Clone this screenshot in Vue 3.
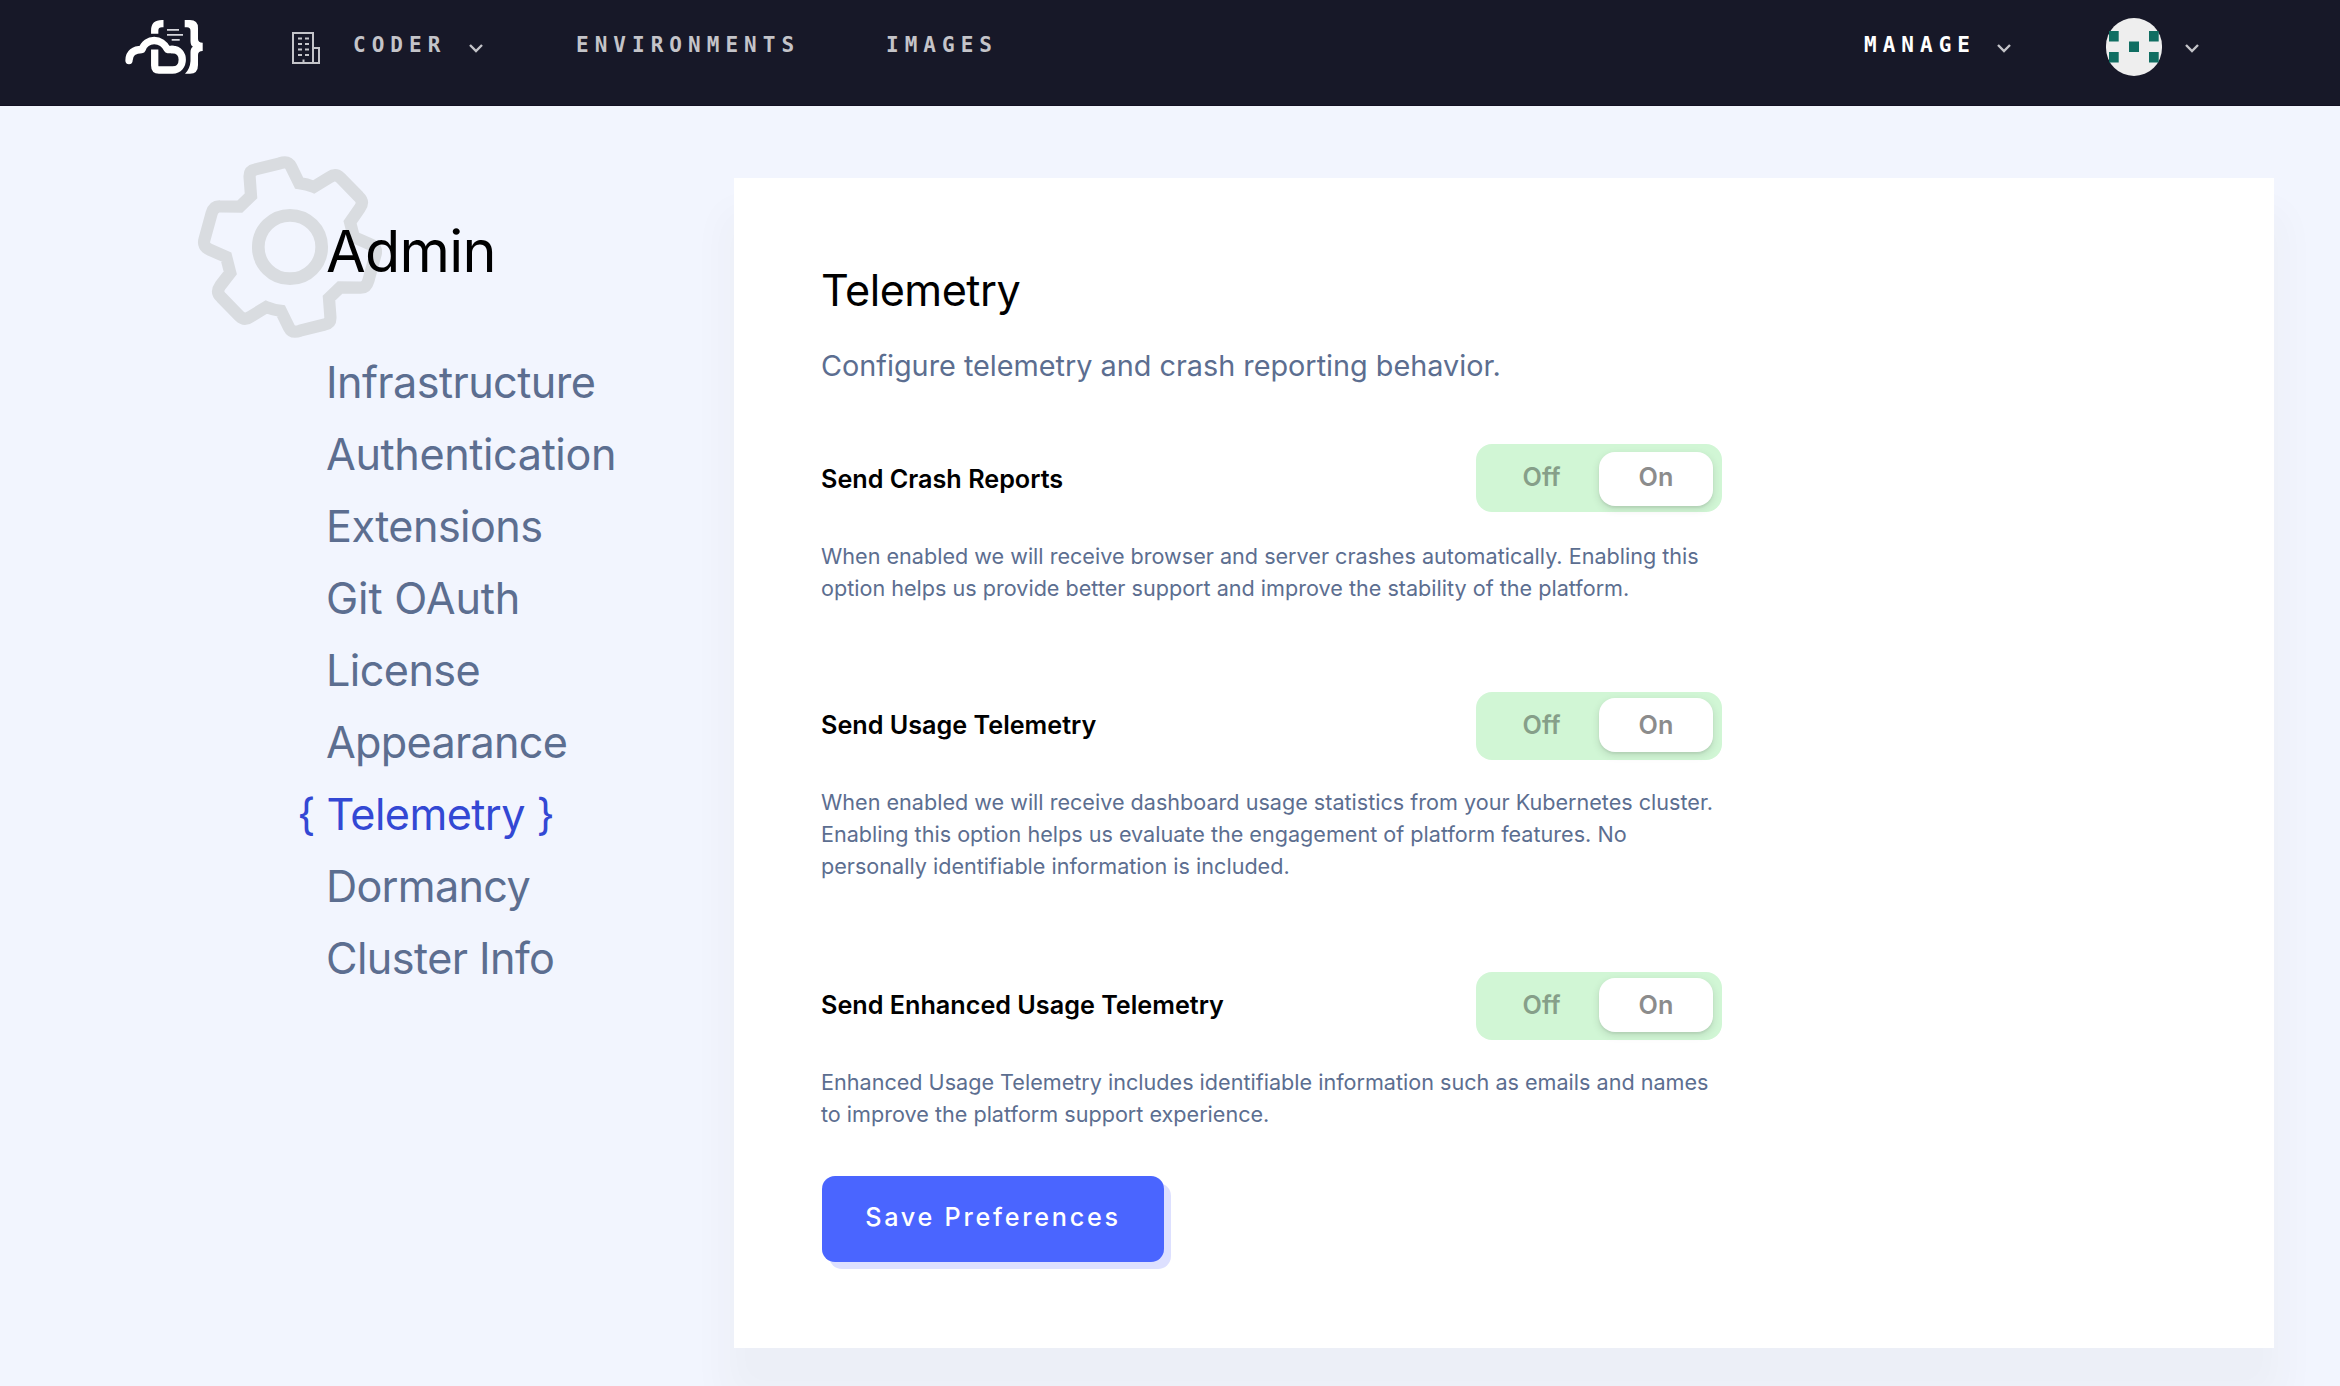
<script setup>
const nav = ['Infrastructure', 'Authentication', 'Extensions', 'Git OAuth', 'License', 'Appearance', 'Telemetry', 'Dormancy', 'Cluster Info']
const settings = [
  { key: 'crash', title: 'Send Crash Reports', lines: ['When enabled we will receive browser and server crashes automatically. Enabling this', 'option helps us provide better support and improve the stability of the platform.'] },
  { key: 'usage', title: 'Send Usage Telemetry', lines: ['When enabled we will receive dashboard usage statistics from your Kubernetes cluster.', 'Enabling this option helps us evaluate the engagement of platform features. No', 'personally identifiable information is included.'] },
  { key: 'enhanced', title: 'Send Enhanced Usage Telemetry', lines: ['Enhanced Usage Telemetry includes identifiable information such as emails and names', 'to improve the platform support experience.'] },
]
</script>

<template>
  <div class="page">
    <header class="topbar">
      <svg class="logo" width="80" height="56" viewBox="0 0 80 56">
        <g fill="none" stroke="#fff" stroke-width="7.300">
          <path d="M39.500 4.700H38Q30.700 4.700 30.700 11.500V14.700" />
          <path d="M5 41.500C5 34 10 30.500 18 30.500C22 18.500 38 18.500 43.500 30.500H49" stroke-linecap="round" stroke-linejoin="round" />
          <path d="M47 30.500H48.500C61.500 30.500 61.500 51 48.500 51H35Q30.700 51 30.700 46.500V30.500" />
        </g>
        <path fill="#fff" d="M60.700 1H66Q74 1 74 9V20Q74 23.700 78.700 23.700V32Q74 32 74 36V46Q74 54.700 66 54.700H61Q66 50 66.500 42V33Q66.500 29 69 27.800Q66.500 26.500 66.500 22V12Q66.500 8.300 63 8.300H60.700z" />
        <path stroke="#d6d6dc" stroke-width="1.800" d="M43 10.800h12M43 15.800h16M47.700 20.800h8" />
      </svg>
      <svg class="building" width="28" height="34" viewBox="0 0 28 34" fill="none" stroke="#c4c4c9" stroke-width="2">
        <path d="M1 2h20v30H1zM21 17h6v15h-6" />
        <path d="M6 7.500h4M13 7.500h4M6 13h4M13 13h4M6 18.500h4M13 18.500h4M6 24h4M13 24h4M11.500 28.500v4" />
      </svg>
      <span class="link org">CODER</span>
      <svg class="chev" width="16" height="10" viewBox="0 0 16 10"><path d="M2 2l6 6 6-6" /></svg>
      <span class="link env">ENVIRONMENTS</span>
      <span class="link img">IMAGES</span>
      <span class="link manage">MANAGE</span>
      <svg class="chev" width="16" height="10" viewBox="0 0 16 10"><path d="M2 2l6 6 6-6" /></svg>
      <svg class="avatar" width="56" height="58" viewBox="0 0 56 58">
        <rect width="56" height="58" rx="28" fill="#eee" />
        <path fill="#106e62" d="M3 13h9.700v10.500H3zM43 13h9.700v10.500H43zM23 23.500h10V34H23zM3 34h9.700v10.500H3zM43 34h9.700v10.500H43z" />
      </svg>
      <svg class="chev" width="16" height="10" viewBox="0 0 16 10"><path d="M2 2l6 6 6-6" /></svg>
    </header>
    <div class="body">
      <aside class="side">
        <svg class="gear" width="184" height="184" viewBox="0 0 184 184" fill="none" stroke="#d9dce0">
          <circle cx="92" cy="91" r="31.700" stroke-width="12.700" />
          <path transform="translate(92 91) scale(1.018) translate(-92 -91)" d="M58 14.800L82 8.800Q90 6 93 12L101 28.300Q108.500 29.300 115.300 32L131 22.500Q136.700 18.300 141.500 23L159.500 41.500Q165 46.700 160.500 53L151 66.700L154.700 81.300L171 88.500Q178 91.500 176 98.500L169 124Q167 131.300 161 131L141.300 130.700L130.300 141.300L131.700 160Q132 166 126 167.200L102 173.200Q94 176 91 170L83 153.700Q75.500 152.700 68.700 150L53 159.500Q47.300 163.700 42.500 159L24.500 140.500Q19 135.300 23.500 129L33.300 116.300L29.300 100.700L13 93.500Q6 90.500 8 83.500L15 58Q17 50.700 23 51L42.700 51.300L53.700 40.700L52.300 22Q52 16 58 14.800z" stroke-width="12" />
        </svg>
        <h1>Admin</h1>
        <nav>
          <a v-for="n in nav" :key="n" :class="{ active: n === 'Telemetry' }">{{ n }}</a>
        </nav>
      </aside>
      <main class="card">
        <h2>Telemetry</h2>
        <p class="sub">Configure telemetry and crash reporting behavior.</p>
        <section v-for="s in settings" :key="s.key" :class="['setting', s.key]">
          <div class="row">
            <h3>{{ s.title }}</h3>
            <div class="toggle"><span class="off">Off</span><span class="on">On</span></div>
          </div>
          <p class="desc"><span v-for="l in s.lines" :key="l">{{ l }}</span></p>
        </section>
        <button>Save Preferences</button>
      </main>
    </div>
  </div>
</template>

<style>
body { margin: 0; }
</style>
<style scoped>
.page { width: 2340px; height: 1386px; overflow: hidden; background: #f2f5fe; font-family: Inter, sans-serif; color: #000; box-sizing: border-box; }
.topbar { height: 106px; box-sizing: border-box; border-bottom: 1px solid #121022; background: #171828; display: flex; align-items: flex-start; padding-left: 124px; }
.topbar > * { flex: none; }
.logo { margin-top: 19px; }
.building { margin: 31px 0 0 88px; }
.link { font: bold 21px/30px "DejaVu Sans Mono", monospace; letter-spacing: 6.030px; color: #c4c4c9; margin-top: 30px; white-space: nowrap; }
.org { margin-left: 33px; width: 93px; }
.chev { margin: 43px 0 0 22px; fill: none; stroke: #c4c4c9; stroke-width: 2.400; }
.env { margin-left: 92px; width: 224px; }
.img { margin-left: 86px; width: 112px; }
.manage { margin-left: 866px; width: 112px; color: #fff; }
.manage + .chev { margin-left: 20px; }
.avatar { margin: 18px 0 0 94px; }
.avatar + .chev { margin-left: 22px; }
.body { display: flex; }
.side { width: 734px; box-sizing: border-box; padding: 105px 0 0 326px; position: relative; }
.gear { position: absolute; left: 198px; top: 50px; overflow: visible; }
h1 { position: relative; margin: 0; font-size: 57.600px; line-height: 80px; font-weight: 400; letter-spacing: -.7px; }
nav { display: flex; flex-direction: column; margin-top: 55px; }
nav a { font-size: 43.200px; line-height: 72px; letter-spacing: -.58px; color: #5c6e90; white-space: nowrap; }
nav a:nth-child(2) { letter-spacing: -.4px; }
nav a:nth-child(4) { letter-spacing: -.15px; }
nav a:nth-child(6) { letter-spacing: -.72px; }
nav a:nth-child(8) { letter-spacing: -.72px; }
nav a.active { color: #3348d4; margin-left: -29px; }
nav a.active::before { content: "{ "; }
nav a.active::after { content: " }"; }
.card { width: 1540px; height: 1170px; margin-top: 72px; box-sizing: border-box; background: #fff; padding: 80px 0 0 87px; box-shadow: 0 44px 36px 10px rgba(60, 60, 30, .03); }
h2 { margin: 0; font-size: 43.200px; line-height: 64px; font-weight: 400; letter-spacing: -.5px; }
.sub { margin: 22px 0 0; font-size: 28.800px; line-height: 44px; color: #5c6e90; }
.setting { width: 901px; }
.crash { margin-top: 56px; height: 248px; }
.usage { height: 280px; }
.enhanced { height: 204px; }
.row { height: 68px; display: flex; align-items: center; justify-content: space-between; }
h3 { margin: 2px 0 0; font-size: 25.200px; font-weight: 600; line-height: 40px; }
.toggle { width: 246px; height: 68px; border-radius: 16px; background: #d1f6d5; box-sizing: border-box; display: flex; padding: 8px 9px 6px 8px; font-size: 25.200px; font-weight: 600; line-height: 50px; text-align: center; }
.off { width: 115px; color: #869f89; }
.on { width: 114px; height: 54px; border-radius: 16px; background: #fff; color: #8c8c8c; box-shadow: 0 3px 8px rgba(0, 0, 0, .12), 0 2px 2px rgba(0, 0, 0, .06); }
.desc { margin: 28px 0 0; font-size: 21.600px; line-height: 32px; color: #5c6e90; }
.desc span { display: block; white-space: nowrap; }
.usage h3, .enhanced h3 { margin-top: -2px; }
.usage .toggle, .enhanced .toggle { padding-top: 6px; line-height: 54px; }
.usage .desc, .enhanced .desc { margin-top: 26px; }
button { display: block; margin-left: 1px; width: 342px; height: 86px; border: 0; border-radius: 13px; background: #4a65ff; color: #fff; box-shadow: 7px 7px 0 #dde0ff; font: 500 25.200px/80px Inter, sans-serif; letter-spacing: 2.750px; padding: 0 0 4px; }
</style>
